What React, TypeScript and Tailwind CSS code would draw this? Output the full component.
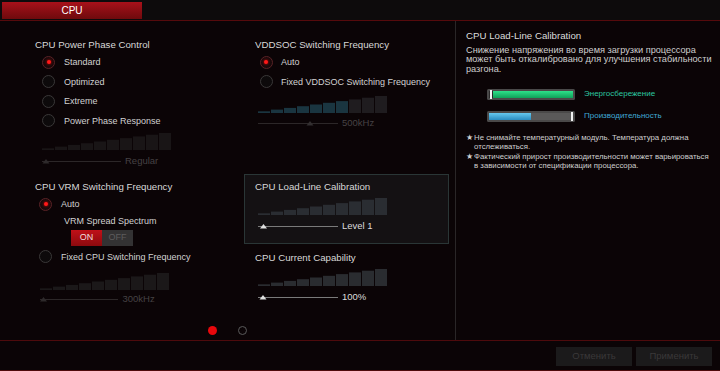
import React from "react";

type BarsProps = { active?: number; activeColor?: string; color?: string };

function Bars({ active = 0, activeColor = "#1b3844", color = "#1e1a1b" }: BarsProps) {
  const bars = [];
  for (let i = 0; i < 10; i++) {
    const h = Math.max(1.5, (17 * (i + 1)) / 10);
    bars.push(
      <rect key={i} x={i * 13} y={17 - h} width={12} height={h} fill={i < active ? activeColor : color} />
    );
  }
  return (
    <svg width={130} height={17} className="block">
      {bars}
    </svg>
  );
}

type SliderProps = {
  width: number;
  pos: number;
  lineColor: string;
  triColor: string;
  value: string;
  valueClass: string;
  gapClass?: string;
};

function Slider({ width, pos, lineColor, triColor, value, valueClass, gapClass = "ml-[4px]" }: SliderProps) {
  return (
    <div className="flex h-[12px] items-center">
      <svg width={width} height={12} className="block shrink-0">
        <line x1={0} y1={6.5} x2={width} y2={6.5} stroke={lineColor} strokeWidth={1} />
        <polygon points={`${pos - 3.5},8.5 ${pos + 3.5},8.5 ${pos},4`} fill={triColor} />
      </svg>
      <span className={`${gapClass} whitespace-nowrap text-[9.5px] leading-[12px] ${valueClass}`}>{value}</span>
    </div>
  );
}

function Radio({ checked = false }: { checked?: boolean }) {
  return (
    <span
      className={`flex h-[13px] w-[13px] shrink-0 items-center justify-center rounded-full border ${
        checked ? "border-[#5a2226] bg-[#160a0b]" : "border-[#3a3838] bg-[#0d0a0b]"
      }`}
    >
      {checked && <span className="h-[4px] w-[4px] rounded-full bg-[#ff1a1a] shadow-[0_0_3px_#ff0000]" />}
    </span>
  );
}

function RadioRow({ checked, label, gap }: { checked?: boolean; label: string; gap: string }) {
  return (
    <div className={`flex h-[19.5px] items-center ${gap}`}>
      <Radio checked={checked} />
      <span className="whitespace-nowrap text-[9px] leading-[12px] text-[#d2d2d2]">{label}</span>
    </div>
  );
}

const title = "whitespace-nowrap text-[9.7px] leading-[12px] text-[#d8d8d8]";

export default function App() {
  return (
    <div className="flex h-[371px] w-[720px] flex-col overflow-hidden bg-[#0b0406] [font-family:'Liberation_Sans',Arial,sans-serif]">
      {/* Top bar */}
      <div className="h-[21px] border-b border-[#560a0c] bg-[#0d0b0c] pl-[2px] pt-[2px]">
        <div className="flex h-[17px] w-[140px] items-center justify-center bg-gradient-to-b from-[#a8111a] to-[#6e0a0d] text-[10px] text-white">
          CPU
        </div>
      </div>

      {/* Main */}
      <div className="flex h-[319px]">
        <div className="flex w-[455px] flex-col">
          <div className="flex h-[305px]">
            {/* Column 1 */}
            <div className="flex w-[244px] flex-col pl-[35px]">
              <div className={`mt-[18px] ${title}`}>CPU Power Phase Control</div>
              <div className="mt-[1.25px] flex flex-col pl-[7px]">
                <RadioRow checked label="Standard" gap="gap-[9px]" />
                <RadioRow label="Optimized" gap="gap-[9px]" />
                <RadioRow label="Extreme" gap="gap-[9px]" />
                <RadioRow label="Power Phase Response" gap="gap-[9px]" />
              </div>
              <div className="mt-[3px] pl-[7px]">
                <Bars color="#191516" />
              </div>
              <div className="mt-[5px] pl-[7px]">
                <Slider width={79} pos={4} lineColor="#2c2728" triColor="#2e2a2b" value="Regular" valueClass="text-[#464244]" />
              </div>
              <div className={`mt-[14px] ${title}`}>CPU VRM Switching Frequency</div>
              <div className="mt-[1.25px] pl-[4px]">
                <RadioRow checked label="Auto" gap="gap-[9px]" />
              </div>
              <div className="mt-[1px] whitespace-nowrap pl-[29px] text-[9px] leading-[12px] text-[#d2d2d2]">
                VRM Spread Spectrum
              </div>
              <div className="ml-[36px] mt-[3px] flex h-[16px] w-[62px] text-[9px]">
                <div className="flex w-[31px] items-center justify-center bg-gradient-to-b from-[#c01018] to-[#8c0a0e] text-[#f0dede]">
                  ON
                </div>
                <div className="flex w-[31px] items-center justify-center bg-[#333233] text-[#5e5c5d]">OFF</div>
              </div>
              <div className="mt-[1px] pl-[4px]">
                <RadioRow label="Fixed CPU Switching Frequency" gap="gap-[9px]" />
              </div>
              <div className="mt-[6px] pl-[5px]">
                <Bars color="#1b1819" />
              </div>
              <div className="mt-[3.5px] pl-[5px]">
                <Slider
                  width={78}
                  pos={3.5}
                  lineColor="#2c2728"
                  triColor="#2e2a2b"
                  value="300kHz"
                  valueClass="text-[#464244]"
                  gapClass="ml-[4.5px]"
                />
              </div>
            </div>

            {/* Column 2 */}
            <div className="flex w-[205px] flex-col">
              <div className={`mt-[18px] pl-[11px] ${title}`}>VDDSOC Switching Frequency</div>
              <div className="mt-[1.25px] flex flex-col pl-[15.5px]">
                <RadioRow checked label="Auto" gap="gap-[8.5px]" />
                <RadioRow label="Fixed VDDSOC Switching Frequency" gap="gap-[8.5px]" />
              </div>
              <div className="mt-[4.75px] pl-[14px]">
                <Bars active={7} activeColor="#1a3540" color="#1f1c1f" />
              </div>
              <div className="mt-[4px] pl-[14px]">
                <Slider width={80} pos={52} lineColor="#2c2728" triColor="#332f30" value="500kHz" valueClass="text-[#464244]" />
              </div>
              <div className="mt-[45px] h-[70px] w-[205px] border border-[#2a3636] bg-[#141113] pl-[10px] pt-[6px]">
                <div className={title}>CPU Load-Line Calibration</div>
                <div className="mt-[5px] pl-[3px]">
                  <Bars color="#2a2d32" />
                </div>
                <div className="mt-[5px] pl-[3px]">
                  <Slider width={80} pos={5.5} lineColor="#7a7a7a" triColor="#e0e0e0" value="Level 1" valueClass="text-[#dcdcdc]" />
                </div>
              </div>
              <div className={`mt-[8px] pl-[11px] ${title}`}>CPU Current Capability</div>
              <div className="mt-[4.5px] pl-[14px]">
                <Bars color="#2a2c30" />
              </div>
              <div className="mt-[5.5px] pl-[14px]">
                <Slider width={80} pos={5} lineColor="#7a7a7a" triColor="#e0e0e0" value="100%" valueClass="text-[#dcdcdc]" />
              </div>
            </div>
          </div>

          {/* Page dots */}
          <div className="flex gap-[21px] pl-[207.5px]">
            <span className="h-[9px] w-[9px] rounded-full bg-[#e8080c]" />
            <span className="h-[9px] w-[9px] rounded-full border border-[#5a5a5a]" />
          </div>
        </div>

        <div className="w-px bg-[#2a2627]" />

        {/* Right panel */}
        <div className="flex flex-1 flex-col pl-[10px] pt-[8.5px]">
          <div className="whitespace-nowrap text-[9.7px] leading-[12px] text-[#dcdcdc]">CPU Load-Line Calibration</div>
          <div className="mt-[4.25px] whitespace-nowrap text-[9.2px] leading-[9.5px] text-[#cfcfcf]">
            Снижение напряжения во время загрузки процессора
            <br />
            может быть откалибровано для улучшения стабильности
            <br />
            разгона.
          </div>
          <div className="mt-[14.25px] flex h-[11px] items-center gap-[9px] pl-[21px]">
            <svg width={88} height={11} className="block shrink-0">
              <defs>
                <linearGradient id="g1" x1="0" y1="0" x2="0" y2="1">
                  <stop offset="0" stopColor="#2ee08a" />
                  <stop offset="1" stopColor="#10a059" />
                </linearGradient>
                <linearGradient id="b1" x1="0" y1="0" x2="0" y2="1">
                  <stop offset="0" stopColor="#66c8ee" />
                  <stop offset="1" stopColor="#2a8cc0" />
                </linearGradient>
              </defs>
              <rect x={0} y={0} width={88} height={11} rx={1.5} fill="#4a4949" />
              <rect x={2} y={2} width={84} height={7} fill="#2a2929" />
              <rect x={6} y={2} width={80} height={7} fill="url(#g1)" />
              <rect x={3} y={1} width={2} height={9} fill="#f2f2f2" />
            </svg>
            <span className="whitespace-nowrap text-[8px] text-[#2cc8a0]">Энергосбережение</span>
          </div>
          <div className="mt-[11px] flex h-[11px] items-center gap-[9px] pl-[21px]">
            <svg width={88} height={11} className="block shrink-0">
              <rect x={0} y={0} width={88} height={11} rx={1.5} fill="#4a4949" />
              <rect x={2} y={2} width={84} height={7} fill="#5a5959" />
              <rect x={2} y={2} width={42} height={7} fill="url(#b1)" />
              <rect x={84} y={1} width={2} height={9} fill="#f2f2f2" />
            </svg>
            <span className="whitespace-nowrap text-[8px] text-[#40aad4]">Производительность</span>
          </div>
          <div className="mt-[12.3px] flex whitespace-nowrap text-[7.8px] leading-[8.7px] text-[#cfcfcf]">
            <span className="w-[8px] shrink-0">★</span>
            <span>
              Не снимайте температурный модуль. Температура должна
              <br />
              отслеживаться.
            </span>
          </div>
          <div className="mt-[1.6px] flex whitespace-nowrap text-[7.8px] leading-[8.7px] text-[#cfcfcf]">
            <span className="w-[8px] shrink-0">★</span>
            <span>
              Фактический прирост производительности может варьироваться
              <br />в зависимости от спецификации процессора.
            </span>
          </div>
        </div>
      </div>

      {/* Footer */}
      <div className="flex h-[31px] justify-end gap-[4px] border-b border-t border-[#4e0a0c] pr-[8px] pt-[6px]">
        <div className="flex h-[19px] w-[76px] items-center justify-center bg-[#1b1a1b] text-[9.5px] text-[#3a3839]">
          Отменить
        </div>
        <div className="flex h-[19px] w-[76px] items-center justify-center bg-[#1b1a1b] text-[9.5px] text-[#3a3839]">
          Применить
        </div>
      </div>
    </div>
  );
}
